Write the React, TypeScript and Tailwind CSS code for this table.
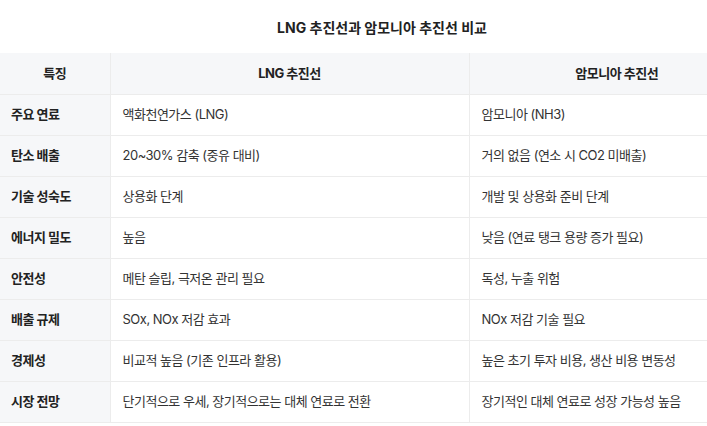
const rows = [
  { label: '주요 연료', lng: '액화천연가스 (LNG)', nh3: '암모니아 (NH3)' },
  { label: '탄소 배출', lng: '20~30% 감축 (중유 대비)', nh3: '거의 없음 (연소 시 CO2 미배출)' },
  { label: '기술 성숙도', lng: '상용화 단계', nh3: '개발 및 상용화 준비 단계' },
  { label: '에너지 밀도', lng: '높음', nh3: '낮음 (연료 탱크 용량 증가 필요)' },
  { label: '안전성', lng: '메탄 슬립, 극저온 관리 필요', nh3: '독성, 누출 위험' },
  { label: '배출 규제', lng: 'SOx, NOx 저감 효과', nh3: 'NOx 저감 기술 필요' },
  { label: '경제성', lng: '비교적 높음 (기존 인프라 활용)', nh3: '높은 초기 투자 비용, 생산 비용 변동성' },
  { label: '시장 전망', lng: '단기적으로 우세, 장기적으로는 대체 연료로 전환', nh3: '장기적인 대체 연료로 성장 가능성 높음' },
]

export default function App() {
  return (
    <div className="w-[707px] h-[426px] overflow-hidden bg-white font-['Inter','Noto_Sans_CJK_KR',sans-serif] text-[#222]">
      <div className="w-[764px]">
        <h2 className="h-[53px] pt-[18px] text-center text-[14px] font-bold leading-5">LNG 추진선과 암모니아 추진선 비교</h2>
        <table className="w-full border-collapse table-fixed text-[13px] tracking-[-0.5px]">
          <colgroup>
            <col className="w-[110px]" />
            <col className="w-[359px]" />
            <col />
          </colgroup>
          <thead>
            <tr className="h-[41px] bg-[#f6f7f9]">
              <th className="border-r border-b border-[#ececec] font-bold">특징</th>
              <th className="border-r border-b border-[#ececec] font-bold">LNG 추진선</th>
              <th className="border-b border-[#ececec] font-bold">암모니아 추진선</th>
            </tr>
          </thead>
          <tbody>
            {rows.map((r) => (
              <tr key={r.label} className="h-[41px]">
                <td className="border-r border-b border-[#ececec] bg-[#f6f7f9] px-[11px] font-bold">{r.label}</td>
                <td className="border-r border-b border-[#ececec] px-3 text-[#333] whitespace-nowrap">{r.lng}</td>
                <td className="border-b border-[#ececec] px-3 text-[#333] whitespace-nowrap">{r.nh3}</td>
              </tr>
            ))}
          </tbody>
        </table>
      </div>
    </div>
  )
}
